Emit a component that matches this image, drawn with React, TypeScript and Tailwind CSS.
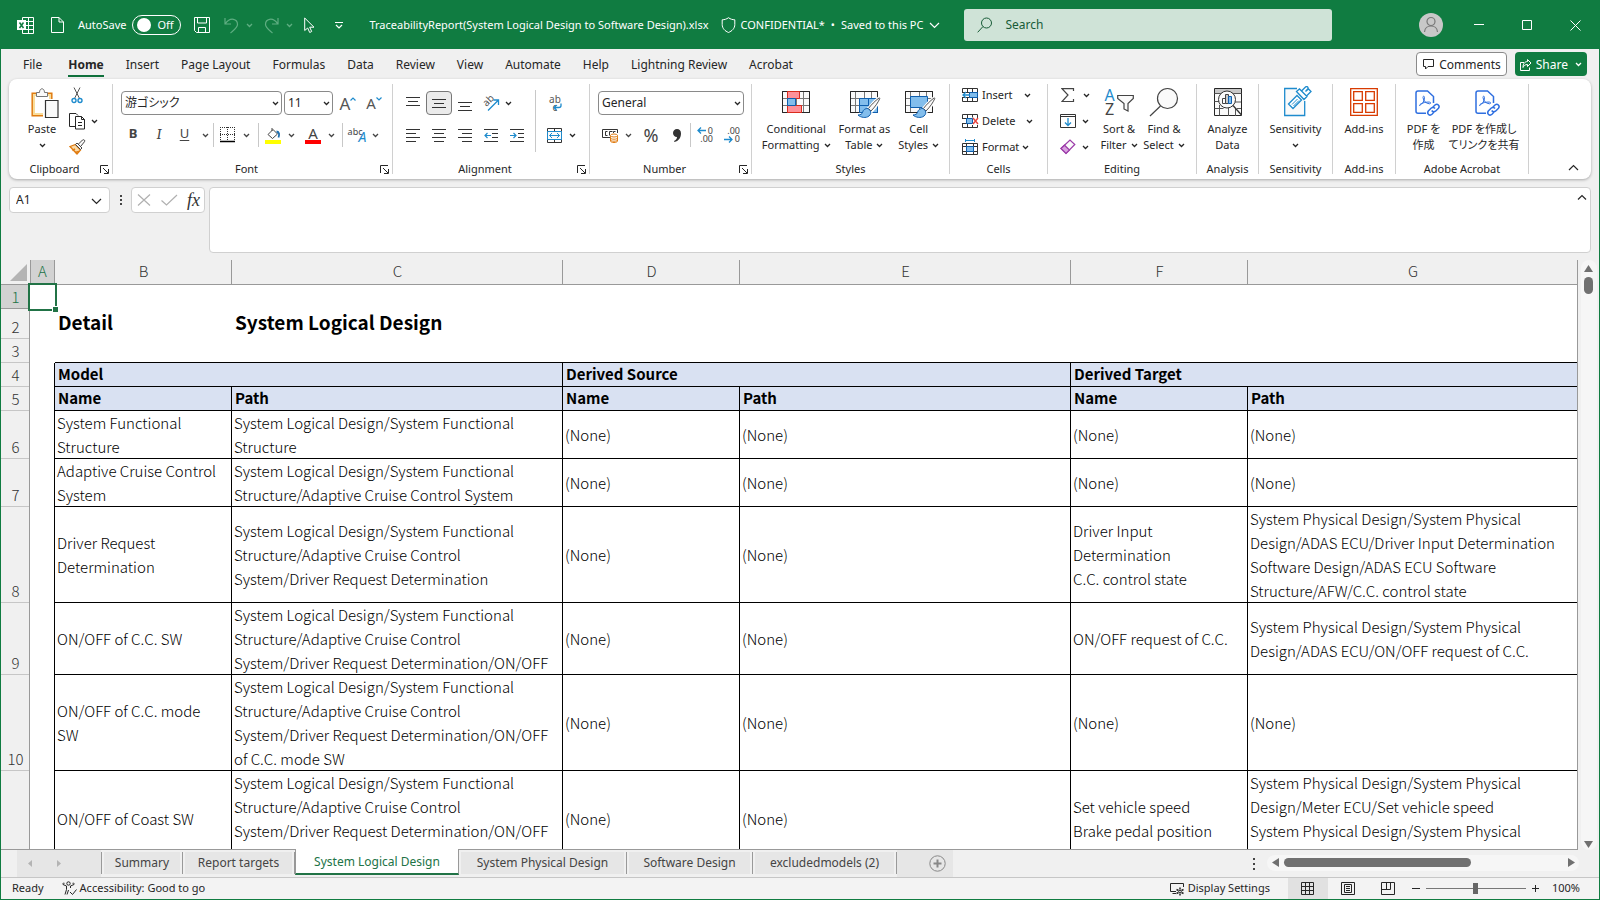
import type { ReactNode } from "react";

const menuTabs = ["File", "Home", "Insert", "Page Layout", "Formulas", "Data", "Review", "View", "Automate", "Help", "Lightning Review", "Acrobat"];

const sheets = [
    { name: "Summary", w: "w-[82px]" },
    { name: "Report targets", w: "w-[112px]" },
    { name: "System Logical Design", w: "w-[164px]" },
    { name: "System Physical Design", w: "w-[168px]" },
    { name: "Software Design", w: "w-[126px]" },
    { name: "excludedmodels (2)", w: "w-[144px]" },
];
const activeSheet = "System Logical Design";

const SYS = "System Logical Design/System Functional\n";
const ACC = SYS + "Structure/Adaptive Cruise Control";

const rows = [
    { n: 6, h: "h-[48px]", cells: ["System Functional\nStructure", SYS + "Structure", "(None)", "(None)", "(None)", "(None)"] },
    { n: 7, h: "h-[48px]", cells: ["Adaptive Cruise Control\nSystem", ACC + " System", "(None)", "(None)", "(None)", "(None)"] },
    {
        n: 8, h: "h-[96px]", cells: [
            "Driver Request\nDetermination",
            ACC + "\nSystem/Driver Request Determination",
            "(None)",
            "(None)",
            "Driver Input\nDetermination\nC.C. control state",
            "System Physical Design/System Physical\nDesign/ADAS ECU/Driver Input Determination\nSoftware Design/ADAS ECU Software\nStructure/AFW/C.C. control state",
        ],
    },
    {
        n: 9, h: "h-[72px]", cells: [
            "ON/OFF of C.C. SW",
            ACC + "\nSystem/Driver Request Determination/ON/OFF",
            "(None)",
            "(None)",
            "ON/OFF request of C.C.",
            "System Physical Design/System Physical\nDesign/ADAS ECU/ON/OFF request of C.C.",
        ],
    },
    {
        n: 10, h: "h-[96px]", cells: [
            "ON/OFF of C.C. mode\nSW",
            ACC + "\nSystem/Driver Request Determination/ON/OFF\nof C.C. mode SW",
            "(None)",
            "(None)",
            "(None)",
            "(None)",
        ],
    },
    {
        n: 11, h: "h-[96px]", cells: [
            "ON/OFF of Coast SW",
            ACC + "\nSystem/Driver Request Determination/ON/OFF\nof Coast SW",
            "(None)",
            "(None)",
            "Set vehicle speed\nBrake pedal position",
            "System Physical Design/System Physical\nDesign/Meter ECU/Set vehicle speed\nSystem Physical Design/System Physical\nDesign/Meter ECU/Brake pedal position",
        ],
    },
];

type IconProps = { w: number; h: number; children: ReactNode; className?: string };

function Icon({ w, h, children, className = "" }: IconProps) {
    return (
        <svg width={w} height={h} viewBox={`0 0 ${w} ${h}`} fill="none" stroke="currentColor" aria-hidden="true" className={"shrink-0 " + className}>
            {children}
        </svg>
    );
}

function Chevron({ className = "" }: { className?: string }) {
    return (
        <Icon w={7} h={5} className={className}>
            <path d="M1 1l2.5 2.5L6 1" strokeWidth="1.3" />
        </Icon>
    );
}

function Btn({ label, className = "", children }: { label: string; className?: string; children: ReactNode }) {
    return (
        <button type="button" aria-label={label} className={"flex h-6 shrink-0 items-center justify-center " + className}>
            {children}
        </button>
    );
}

function DropBtn({ label, className = "w-[10px]" }: { label: string; className?: string }) {
    return (
        <Btn label={label} className={className}>
            <Chevron />
        </Btn>
    );
}

function Sep() {
    return <div className="h-6 w-px shrink-0 bg-[#c8c8c8]" />;
}

function Combo({ label, value, className }: { label: string; value: string; className: string }) {
    return (
        <div className={"relative h-6 shrink-0 " + className}>
            <select aria-label={label} className="h-6 w-full appearance-none rounded border border-[#8a8a8a] bg-white pl-[3px] text-[12px] leading-[22px] [font-feature-settings:'palt']">
                <option>{value}</option>
            </select>
            <Chevron className="pointer-events-none absolute right-[3px] top-[10px]" />
        </div>
    );
}

function Group({ label, className, launcher, children }: { label: string; className: string; launcher?: boolean; children: ReactNode }) {
    return (
        <>
            <section aria-label={label} className={"flex shrink-0 flex-col " + className}>
                <div className="h-[80px]">{children}</div>
                <div className="flex h-5 items-center">
                    <span className="flex-1 text-center">{label}</span>
                    {launcher && (
                        <button type="button" aria-label={label + " settings"} className="w-3">
                            <Icon w={9} h={9}>
                                <path d="M.5 8V.5H8M3 3l5 5M8.500 4v4.500H4" />
                            </Icon>
                        </button>
                    )}
                </div>
            </section>
            <div className="my-[5px] w-px shrink-0 bg-[#d0d0d0]" />
        </>
    );
}

function BigBtn({ icon, lines, drop, className = "" }: { icon: ReactNode; lines: string[]; drop?: boolean; className?: string }) {
    return (
        <button type="button" className={"flex shrink-0 flex-col items-center whitespace-nowrap pt-[7px] leading-4 " + className}>
            <span className="flex h-[35px] justify-center">{icon}</span>
            <span>{lines[0]}</span>
            <span className="flex h-4 items-center gap-1">
                {lines[1]}
                {drop && <Chevron />}
            </span>
        </button>
    );
}

// ---- ribbon icons ----

const blue = "#1e8bcd";

function Grid({ children }: { children?: ReactNode }) {
    return (
        <>
            <path d="M.5 .5h27v21H.5z" fill="#fafafa" />
            <path d="M.5 7.500h27M.5 14.500h27M5.500 .5v21M14.500 .5v21M21.500 .5v21" stroke="#777" />
            <path d="M.5 .5h27v21H.5z" />
            {children}
        </>
    );
}

function Brush() {
    return (
        <>
            <path d="M29.500 6.500c-4 3-8 7-11 11l3 3c4-4 7-9 9-12.500.6-1.400 0-2.200-1-1.500z" fill="#fff" stroke="#fff" strokeWidth="3" />
            <path d="M29 7c-4 3-8 7-10.500 10.500l2.500 2.500c4-4 7-8.500 8.600-12 .4-1 0-1.300-.6-1z" fill="#fafafa" stroke="#555" />
            <path d="M18 17.500c-2.500-.3-5 1.200-5.500 4-.3 1.500-2 2.300-4.500 2.500 2.500 2.500 8 3.500 11 1 2-1.700 2-3.500 1.500-5z" fill="#83beec" stroke="#0f5fae" />
        </>
    );
}

function PasteIcon() {
    return (
        <Icon w={28} h={31} className="mt-[2px]">
            <path d="M1.200 5.200h19.600v22.600H1.200z" fill="#fff" stroke="#e07b10" strokeWidth="1.500" />
            <path d="M3 7h16v19H3z" stroke="#f8dc9a" strokeWidth="2" />
            <path d="M5.500 8.500v-4h3c0-5 5-5 5 0h3v4z" fill="#fafafa" stroke="#777" />
            <path d="M12 11h16v20H12z" fill="#fff" stroke="none" />
            <path d="M14.500 12.500h12.500v17H14.500z" fill="#fafafa" stroke="#333" strokeWidth="1.200" />
        </Icon>
    );
}

function CutIcon() {
    return (
        <Icon w={12} h={17}>
            <path d="M3 .5l5.500 11M9 .5L3.500 11.500" stroke="#555" />
            <circle cx="3" cy="13.500" r="2" stroke={blue} strokeWidth="1.400" />
            <circle cx="9" cy="13.500" r="2" stroke={blue} strokeWidth="1.400" />
        </Icon>
    );
}

function CopyIcon() {
    return (
        <Icon w={17} h={17}>
            <path d="M6 13.500H.5V.5H7l2 2" />
            <path d="M6.500 3.500h6l3 3v9.500h-9z" fill="#fff" />
            <path d="M12.500 3.500v3h3M9 9.500h4M9 12.500h4" />
        </Icon>
    );
}

function PainterIcon() {
    return (
        <Icon w={17} h={16}>
            <path d="M1 7.500l5.500-2 5 5.500-3.500 4z" fill="#f9d9a6" stroke="#e07b10" strokeWidth="1.300" />
            <path d="M3.500 11.500l2.500-1.500M6 13.500l4-1" stroke="#e07b10" strokeWidth="1.500" />
            <path d="M6.500 5.500l1.500-1.500 5 5-1.500 1.500zM9.500 5l4-4c1.200-1 3 .5 2 1.700L12 7" fill="#fafafa" stroke="#444" />
        </Icon>
    );
}

function Lines({ d }: { d: string }) {
    return (
        <Icon w={14} h={15}>
            <path d={d} stroke="#333" />
        </Icon>
    );
}

function Indent({ right }: { right?: boolean }) {
    return (
        <Icon w={14} h={15}>
            <path d="M0 1.500h14M8 5.500h6M8 9.500h6M0 13.500h14" stroke="#333" />
            <path d={right ? "M0 7.500h6M3.500 5L6 7.500 3.500 10" : "M7 7.500H1M3.500 5L1 7.500 3.500 10"} stroke={blue} strokeWidth="1.200" />
        </Icon>
    );
}

function BorderIcon() {
    return (
        <Icon w={15} h={16}>
            <path d="M.5 0v14M14.500 0v14M7.500 0v14M0 .5h15M0 7.500h15" stroke="#333" strokeDasharray="1 1" />
            <path d="M0 14.500h15" stroke="#000" strokeWidth="1.500" />
        </Icon>
    );
}

function BucketIcon() {
    return (
        <Icon w={16} h={17}>
            <path d="M3 7.500L8 2.500l4.500 4.500-5 4.500zM7 4V1" stroke="#444" />
            <path d="M11.500 4.500c3 .3 3 3 2 6" stroke="#1e6fb0" strokeWidth="1.800" />
            <path d="M0 13h16v4H0z" fill="#ffff00" stroke="none" />
        </Icon>
    );
}

function OrientationIcon() {
    return (
        <span className="relative block h-4 w-[17px] text-[10px] leading-none text-[#555]">
            <span className="absolute -left-px top-0 -rotate-45">ab</span>
            <Icon w={17} h={16} className="absolute left-0 top-0">
                <path d="M5 15.500L15 5.500M10.500 5h5v5" stroke={blue} strokeWidth="1.300" />
            </Icon>
        </span>
    );
}

function WrapIcon() {
    return (
        <span className="relative block h-4 w-[14px] text-[10px] leading-[8px] text-[#555]">
            ab
            <br />
            c
            <Icon w={9} h={8} className="absolute bottom-0 right-0">
                <path d="M8 .5v2c0 1.500-1 2-2 2H1M3.500 2L1 4.500 3.500 7" stroke={blue} strokeWidth="1.300" />
            </Icon>
        </span>
    );
}

function MergeIcon() {
    return (
        <Icon w={15} h={15}>
            <path d="M.5 .5h14v14H.5zM7.500.5v4M7.500 11.500v3" stroke="#333" />
            <path d="M.5 3.500h14v8H.5z" stroke={blue} fill="#fafafa" />
            <path d="M2.500 7.500h10M5 5L2.500 7.500 5 10M10 5l2.500 2.500L10 10" stroke={blue} />
        </Icon>
    );
}

function CurrencyIcon() {
    return (
        <Icon w={17} h={16}>
            <path d="M8 10.500H.5v-8h15V6" stroke="#333" />
            <path d="M5.500 4.500h-2v4h2M7.500 8.500v-4h3M11.500 6v-1.500h2" stroke="#333" />
            <path d="M8.500 8.500v5.500c0 2 7 2 7 0V8.500" fill="#fff" stroke="#e07b10" />
            <ellipse cx="12" cy="8.500" rx="3.500" ry="1.500" fill="#fff" stroke="#e07b10" />
            <path d="M8.500 11c0 1.600 7 1.600 7 0M8.500 13c0 1.600 7 1.600 7 0" stroke="#e07b10" />
        </Icon>
    );
}

function DecimalIcon({ more }: { more?: boolean }) {
    return (
        <span className="relative block h-4 w-4 text-right text-[9px] leading-[8px] text-[#444]">
            {more ? "0" : ".00"}
            <br />
            {more ? ".00" : "0"}
            <Icon w={9} h={7} className={more ? "absolute left-0 top-0" : "absolute bottom-0 left-0"}>
                <path d={more ? "M9 3.500H1M4 .5l-3 3 3 3" : "M0 3.500h8M5 .5l3 3-3 3"} stroke={blue} strokeWidth="1.300" />
            </Icon>
        </span>
    );
}

function ConditionalIcon() {
    return (
        <Icon w={28} h={22} className="mt-[5px]">
            <Grid>
                <path d="M5.500 .5h12v7h-12zM5.500 14.500h14v7h-14z" fill="#ff9199" stroke="#d92b1c" />
                <path d="M5.500 7.500h8v7h-8z" fill="#83beec" stroke="#0f5fae" />
            </Grid>
        </Icon>
    );
}

function FormatTableIcon() {
    return (
        <Icon w={31} h={27} className="ml-[3px] mt-[5px]">
            <Grid>
                <path d="M9.500 7.500h18v14h-18z" fill="#83beec" stroke="#0f5fae" />
                <path d="M9.500 14.500h18M18.500 7.500v14" stroke="#0f5fae" />
            </Grid>
            <Brush />
        </Icon>
    );
}

function CellStylesIcon() {
    return (
        <Icon w={31} h={27} className="ml-[3px] mt-[5px]">
            <Grid>
                <path d="M5.500 5.500h17v11h-17z" fill="#83beec" stroke="#0f5fae" />
            </Grid>
            <Brush />
        </Icon>
    );
}

function InsertCellIcon() {
    return (
        <Icon w={17} h={15}>
            <path d="M.5 .5h15v13H.5zM5.500.5v13M10.500.5v13M.5 4.500h15M.5 9.500h15" stroke="#333" />
            <path d="M7.500 4.500h8v5h-8z" fill="#83beec" stroke="#0f5fae" />
            <path d="M0 5h7v4H0z" fill="#fff" stroke="none" />
            <path d="M8 7H1M4 4L1 7l3 3" stroke={blue} strokeWidth="1.300" />
        </Icon>
    );
}

function DeleteCellIcon() {
    return (
        <Icon w={17} h={15}>
            <path d="M.5 4V.5h15V4M.5 10v3.500h15V11M5.500.5v13M10.500.5v3M10.500 11v2.500M0 4.500h6M0 9.500h6" stroke="#333" />
            <path d="M4.500 4.500h6v5h-6z" fill="#83beec" stroke="#0f5fae" />
            <path d="M11 4l5 6M16 4l-5 6" stroke="#e8413a" strokeWidth="1.400" />
        </Icon>
    );
}

function FormatCellIcon() {
    return (
        <Icon w={17} h={17}>
            <path d="M3.500 1.500h9M3.500 0v3M12.500 0v3" stroke={blue} />
            <path d="M.5 4.500h15v11H.5zM4.500 4.500v11M11.500 4.500v11M.5 7.500h15M.5 12.500h15" stroke="#333" />
            <path d="M4.500 7.500h7v5h-7z" fill="#83beec" stroke="#0f5fae" />
        </Icon>
    );
}

function SumIcon() {
    return (
        <Icon w={14} h={15}>
            <path d="M12.500 3V.7H1l6 6.300-6 6.500h11.500V11" stroke="#444" strokeWidth="1.200" />
        </Icon>
    );
}

function FillDownIcon() {
    return (
        <Icon w={16} h={14}>
            <path d="M.5 .5h15v13H.5zM.5 2.500h15" stroke="#333" />
            <path d="M8 4v7M5 8.500l3 3 3-3" stroke={blue} strokeWidth="1.300" />
        </Icon>
    );
}

function EraserIcon() {
    return (
        <Icon w={16} h={16}>
            <path d="M1 9.500L10 1l4.800 4.500L6 14.500z" fill="#fafafa" stroke="#9b3ba8" strokeWidth="1.200" />
            <path d="M1 9.500L4.500 6.200l5 4.800L6 14.500z" fill="#d9a0e0" stroke="#9b3ba8" strokeWidth="1.200" />
        </Icon>
    );
}

function SortFilterIcon() {
    return (
        <span className="mt-[2px] flex h-7 gap-[2px]">
            <span className="block text-[16px] leading-[14px] text-[#444]">
                <span className="block text-[#1e8bcd]">A</span>
                <span className="block">Z</span>
            </span>
            <Icon w={17} h={28}>
                <path d="M.7 7.500h15.600v3L11 15.500v7.500l-4-2v-5.500L.7 10.500z" fill="#fafafa" stroke="#444" strokeWidth="1.200" />
            </Icon>
        </span>
    );
}

function FindIcon() {
    return (
        <Icon w={30} h={30} className="mt-[1px]">
            <circle cx="18.500" cy="11.500" r="10" fill="#fafafa" stroke="#444" strokeWidth="1.200" />
            <path d="M11.500 19L1 29" stroke="#444" strokeWidth="1.200" />
        </Icon>
    );
}

function AnalyzeIcon() {
    return (
        <Icon w={28} h={28} className="mt-[2px]">
            <path d="M.5 .5h27v27H.5z" fill="#fafafa" />
            <path d="M1 1h26v4H1z" fill="#c8c8c8" stroke="none" />
            <path d="M.5 5.500h27M.5 13.500h6M.5 20.500h9M5.500 17v10.500M14.500 20v8M21.500 20v8M21 14h6M23 20.500h4" stroke="#555" />
            <circle cx="13" cy="11.500" r="8.500" fill="#fafafa" stroke="#333" />
            <path d="M19 17.500l8.500 9.500" stroke="#333" strokeWidth="1.300" />
            <path d="M8.500 10.500h3v5h-3z" stroke="#444" fill="#fff" />
            <path d="M11.500 6.500h3v9h-3z" stroke="#444" fill="#c8c8c8" />
            <path d="M14.500 8.500h3v7h-3z" fill="#83beec" stroke="#0f5fae" />
        </Icon>
    );
}

function SensitivityIcon() {
    return (
        <Icon w={28} h={31}>
            <path d="M13 2.500H.7V29.500h20V15" fill="#fafafa" stroke={blue} strokeWidth="1.300" />
            <path d="M4.500 18l8.500-8.500 4.500 4.500L9 22.500z" fill="#fff" stroke={blue} strokeWidth="1.300" />
            <path d="M8 18.500l5.500-5.500M9.500 20L15 14.500" stroke={blue} />
            <path d="M12.500 5.500l3-2.500 7.500 7.500-3 3zM17.500 5l4-4c1.500-1.300 3.500.5 2 2.200L21.500 5.500l3-2.500 2.500 2.500-4.500 4.500" fill="#fff" stroke={blue} strokeWidth="1.300" />
        </Icon>
    );
}

function AddinsIcon() {
    return (
        <Icon w={28} h={28} className="mt-[2px]">
            <path d="M.7.700h26.600v26.600H.7z" fill="#fff" stroke="#d83b01" strokeWidth="1.300" />
            <path d="M3.700 3.700h8.600v8.600H3.700zM15.700 3.700h8.600v8.600h-8.600zM3.700 15.700h8.600v8.600H3.700zM15.700 15.700h8.600v8.600h-8.600z" stroke="#d83b01" strokeWidth="1.300" />
        </Icon>
    );
}

function PdfIcon() {
    return (
        <Icon w={26} h={29} className="ml-2 mt-1">
            <path d="M11 23.300H3c-1.300 0-2-.8-2-2V3c0-1.300.8-2 2-2h9.500l6 5.500V13" stroke="#2f6fe0" strokeWidth="1.500" />
            <path d="M4.500 15.500c3-1.500 5-4.500 5-8 0-1.700-1.700-1.700-1.500 0 .3 3.500 3 6 6.500 6.300 1.500 0 1.500-1.600 0-1.700-4-.3-10 1.400-10 3.400z" stroke="#2f6fe0" />
            <g transform="translate(.5 -.5)" stroke="#fff" strokeWidth="4">
                <path d="M18.500 17.500l2-2c2.500-2 5.300.8 3.500 3.200l-3 3M19 21.500l-2.300 2.700c-2.300 2.300-5.500-.5-3.500-3.200l2.800-2.800" />
            </g>
            <path d="M17.500 17.500l2.500-2.500c2.500-2 5.300.8 3.500 3.200l-3 3c-1.300 1-3 .6-3.800-.7M19.500 21.500l-2.500 2.700c-2.500 2.300-5.500-.5-3.700-3.200l3-3c1.200-1 3-.7 3.700.5" stroke="#2f6fe0" strokeWidth="1.500" />
        </Icon>
    );
}

// ---- window parts ----

function TitleBar() {
    return (
        <header className="flex h-[49px] shrink-0 items-center bg-[#107c41] pt-px text-white">
            <Icon w={17} h={17} className="ml-4">
                <path d="M5.500.5h11v16h-11zM5.500 4.500h11M5.500 8.500h11M5.500 12.500h11M11.500.5v16" />
                <path d="M0 3h9v10H0z" fill="#fff" stroke="none" />
                <path d="M2.500 5.500l4 5.500M6.500 5.500l-4 5.500" stroke="#107c41" strokeWidth="1.500" />
            </Icon>
            <Btn label="New" className="ml-4 w-[14px]">
                <Icon w={13} h={16}>
                    <path d="M.5 .5H8l4.500 4.500v10.500H.5zM8 .5V5h4.500" />
                </Icon>
            </Btn>
            <label htmlFor="autosave" className="ml-[14px]">AutoSave</label>
            <button id="autosave" type="button" role="switch" aria-checked="false" className="ml-[6px] flex h-5 w-[49px] items-center gap-[6px] rounded-full border border-white pl-1">
                <span className="h-[14px] w-[14px] rounded-full bg-white" />
                Off
            </button>
            <Btn label="Save" className="ml-3 w-[18px]">
                <Icon w={16} h={16}>
                    <path d="M.5 .5h15v15h-13l-2-2zM3.500.5v5.500h9V.5M4.500 15.500v-5h7v5" />
                </Icon>
            </Btn>
            <Btn label="Undo" className="ml-3 w-4 text-[#5fae82]">
                <Icon w={15} h={17}>
                    <path d="M1 1v6h6M1.500 6.500c5-7 12-4.500 12 1 0 3-3 5-7 8.500" strokeWidth="1.200" />
                </Icon>
            </Btn>
            <DropBtn label="Undo list" className="ml-1 w-3 text-[#5fae82]" />
            <Btn label="Redo" className="ml-2 w-4 text-[#5fae82]">
                <Icon w={15} h={17}>
                    <path d="M14 1v6H8M13.500 6.500c-5-7-12-4.500-12 1 0 3 3 5 7 8.500" strokeWidth="1.200" />
                </Icon>
            </Btn>
            <DropBtn label="Redo list" className="ml-1 w-3 text-[#5fae82]" />
            <Btn label="Select objects" className="ml-2 w-3">
                <Icon w={11} h={16}>
                    <path d="M.7 1v12.500l3-2.500 2 4.500 2-1-2-4.300h4.300z" />
                </Icon>
            </Btn>
            <Btn label="Customize toolbar" className="ml-[18px] w-3">
                <Icon w={8} h={7}>
                    <path d="M0 .5h8M1 3l3 3 3-3" strokeWidth="1.200" />
                </Icon>
            </Btn>
            <h1 className="ml-6 whitespace-nowrap">TraceabilityReport(System Logical Design to Software Design).xlsx</h1>
            <Icon w={15} h={16} className="ml-3">
                <path d="M7.500.7c2 1.500 4 2 6.300 2.100v4.700c0 4-2.800 6.500-6.300 8C4 14 1.200 11.500 1.200 7.500V2.800C3.500 2.700 5.500 2.200 7.500.7z" />
            </Icon>
            <span className="ml-[5px] whitespace-nowrap">CONFIDENTIAL*</span>
            <span className="mx-[6px]">•</span>
            <button type="button" className="flex items-center gap-[6px] whitespace-nowrap">
                Saved to this PC
                <Icon w={11} h={7}>
                    <path d="M1 1l4.500 4.500L10 1" strokeWidth="1.200" />
                </Icon>
            </button>
            <label className="ml-6 flex h-8 w-[368px] items-center gap-3 rounded-[3px] bg-[#cfe3d7] pl-[13px] text-[#185c37]">
                <Icon w={16} h={16}>
                    <circle cx="9.500" cy="6" r="5" />
                    <path d="M6 9.500L.7 15.300" />
                </Icon>
                <input type="search" aria-label="Search" placeholder="Search" className="min-w-0 flex-1 bg-transparent text-[12px] outline-none placeholder:text-[#185c37]" />
            </label>
            <div className="ml-auto flex items-center">
                <button type="button" aria-label="Account" className="mr-3 flex h-6 w-6 items-center justify-center rounded-full bg-[#c8c8c8] text-[#777]">
                    <Icon w={16} h={18}>
                        <circle cx="8" cy="5.500" r="4" strokeWidth="1.200" />
                        <path d="M1.500 16c.5-8 12.500-8 13 0" strokeWidth="1.200" />
                    </Icon>
                </button>
                <Btn label="Minimize" className="w-12">
                    <Icon w={10} h={10}><path d="M0 4.500h10" /></Icon>
                </Btn>
                <Btn label="Maximize" className="w-12">
                    <Icon w={10} h={10}><path d="M.5 .5h9v9h-9z" /></Icon>
                </Btn>
                <Btn label="Close" className="w-12">
                    <Icon w={11} h={11}><path d="M.5 .5l10 10M10.500.5l-10 10" /></Icon>
                </Btn>
            </div>
        </header>
    );
}

function MenuBar() {
    return (
        <div className="flex h-[30px] shrink-0 items-center pl-[22px] pr-3 text-[12px]">
            <nav className="flex gap-[22px] pt-px">
                {menuTabs.map((tab) => (
                    <a
                        key={tab}
                        href="#"
                        className={"h-6 whitespace-nowrap leading-6 " + (tab === "Home" ? "ml-1 border-b-2 border-[#0f703b] font-bold" : "")}
                    >
                        {tab}
                    </a>
                ))}
            </nav>
            <button type="button" className="ml-auto flex h-6 items-center gap-[5px] rounded border border-[#8a8a8a] bg-white px-[5px] pt-px">
                <Icon w={12} h={11}>
                    <path d="M1.500.5h10v7H6L3.500 10V7.500h-2z" />
                </Icon>
                Comments
            </button>
            <button type="button" className="ml-2 flex h-6 items-center gap-1 rounded bg-[#107c41] px-[5px] pt-px text-white">
                <Icon w={12} h={12}>
                    <path d="M4 3.500H.5v8h9v-3M7.500.5l3.500 3.500-3.500 3.500V5.500C5 5.500 4 6.500 3 8.500c0-4 2-6 4.500-6z" />
                </Icon>
                Share
                <Chevron className="ml-[3px]" />
            </button>
        </div>
    );
}

function Ribbon() {
    return (
        <div className="mx-2 flex h-[100px] shrink-0 rounded-lg bg-white shadow-[0_1px_3px_rgba(0,0,0,0.3)]">
            <Group label="Clipboard" className="w-[103px]" launcher>
                <div className="flex">
                    <BigBtn className="ml-2 w-[50px]" icon={<span className="ml-[5px]"><PasteIcon /></span>} lines={["Paste", ""]} drop />
                    <div className="-ml-[2px] flex flex-col gap-[2px] pt-1">
                        <Btn label="Cut" className="w-6"><CutIcon /></Btn>
                        <div className="flex">
                            <Btn label="Copy" className="w-6"><CopyIcon /></Btn>
                            <DropBtn label="Copy options" />
                        </div>
                        <Btn label="Format Painter" className="w-6"><PainterIcon /></Btn>
                    </div>
                </div>
            </Group>

            <Group label="Font" className="w-[279px]" launcher>
                <div className="flex pl-2 pt-3">
                    <Combo label="Font name" value="游ゴシック" className="w-[161px]" />
                    <Combo label="Font size" value="11" className="ml-[2px] w-[49px]" />
                    <Btn label="Increase font size" className="ml-[2px] w-[26px]">
                        <span className="text-[17px] leading-none text-[#555]">A</span>
                        <Icon w={6} h={4} className="mb-[9px]"><path d="M.5 3.500L3 1l2.500 2.500" stroke={blue} strokeWidth="1.200" /></Icon>
                    </Btn>
                    <Btn label="Decrease font size" className="w-[26px]">
                        <span className="text-[15px] leading-none text-[#555]">A</span>
                        <Icon w={6} h={4} className="mb-[9px]"><path d="M.5 .5L3 3 5.500.5" stroke={blue} strokeWidth="1.200" /></Icon>
                    </Btn>
                </div>
                <div className="flex pl-[7px] pt-2 text-[#444]">
                    <Btn label="Bold" className="w-[26px] pb-[2px] text-[13px] font-bold">B</Btn>
                    <Btn label="Italic" className="w-[26px] pb-[2px] font-serif text-[15px] italic">I</Btn>
                    <Btn label="Underline" className="w-[25px] pb-[2px] text-[13px] underline underline-offset-2">U</Btn>
                    <DropBtn label="Underline options" className="w-[16px]" />
                    <Sep />
                    <Btn label="Borders" className="w-[27px]"><BorderIcon /></Btn>
                    <DropBtn label="Border options" />
                    <div className="w-[7px]" />
                    <Sep />
                    <Btn label="Fill color" className="w-7"><BucketIcon /></Btn>
                    <DropBtn label="Fill color options" className="w-2" />
                    <Btn label="Font color" className="ml-1 w-7">
                        <span className="flex flex-col items-center border-b-4 border-[#ff0000] px-[3px] text-[15px] leading-[13px]">A</span>
                    </Btn>
                    <DropBtn label="Font color options" className="w-2" />
                    <div className="w-[7px]" />
                    <Sep />
                    <Btn label="Phonetic" className="w-7">
                        <span className="mb-2 text-[9px] leading-none">abc</span>
                        <span className="-ml-1 mt-1 text-[14px] italic leading-none text-[#1e8bcd]">A</span>
                    </Btn>
                    <DropBtn label="Phonetic options" className="w-2" />
                </div>
            </Group>

            <Group label="Alignment" className="w-[196px]" launcher>
                <div className="flex">
                    <div className="flex w-[137px] flex-col gap-2 pl-[7px] pt-3">
                        <div className="flex">
                            <Btn label="Top align" className="w-[26px]"><Lines d="M0 1.500h14M2 5.500h10M0 9.500h14" /></Btn>
                            <Btn label="Middle align" className="w-[26px] rounded border border-[#777] bg-[#ebebeb]"><Lines d="M0 3.500h14M2 7.500h10M0 11.500h14" /></Btn>
                            <Btn label="Bottom align" className="w-[26px]"><Lines d="M0 6.500h14M2 10.500h10M0 14.500h14" /></Btn>
                            <Btn label="Orientation" className="w-[26px]"><OrientationIcon /></Btn>
                            <DropBtn label="Orientation options" className="w-2" />
                        </div>
                        <div className="flex">
                            <Btn label="Align left" className="w-[26px]"><Lines d="M0 1.500h14M0 5.500h10M0 9.500h14M0 13.500h10" /></Btn>
                            <Btn label="Center" className="w-[26px]"><Lines d="M0 1.500h14M2 5.500h10M0 9.500h14M2 13.500h10" /></Btn>
                            <Btn label="Align right" className="w-[26px]"><Lines d="M0 1.500h14M4 5.500h10M0 9.500h14M4 13.500h10" /></Btn>
                            <Btn label="Decrease indent" className="w-[26px]"><Indent /></Btn>
                            <Btn label="Increase indent" className="w-[26px]"><Indent right /></Btn>
                        </div>
                    </div>
                    <div className="ml-[5px] mt-[11px] h-[62px] w-px bg-[#c8c8c8]" />
                    <div className="flex flex-col gap-2 pl-[5px] pt-3">
                        <Btn label="Wrap text" className="w-[28px]"><WrapIcon /></Btn>
                        <div className="flex">
                            <Btn label="Merge and center" className="w-[26px]"><MergeIcon /></Btn>
                            <DropBtn label="Merge options" />
                        </div>
                    </div>
                </div>
            </Group>

            <Group label="Number" className="w-[161px]" launcher>
                <div className="pl-2 pt-3">
                    <Combo label="Number format" value="General" className="w-[146px]" />
                </div>
                <div className="flex pl-[7px] pt-2 text-[#444]">
                    <Btn label="Currency" className="w-[26px]"><CurrencyIcon /></Btn>
                    <DropBtn label="Currency options" />
                    <Btn label="Percent" className="ml-[5px] w-[26px] text-[18px]">%</Btn>
                    <Btn label="Comma" className="w-[26px]">
                        <Icon w={8} h={13}>
                            <path d="M4 0c2.500 0 4 1.600 4 4.500C8 9 5.500 12 1.500 13l-.5-1c2-.8 3-2.200 3-4C1.500 8 0 6.200 0 4s1.700-4 4-4z" fill="#333" stroke="none" />
                        </Icon>
                    </Btn>
                    <Sep />
                    <Btn label="Increase decimal" className="w-[28px]"><DecimalIcon more /></Btn>
                    <Btn label="Decrease decimal" className="w-[26px]"><DecimalIcon /></Btn>
                </div>
            </Group>

            <Group label="Styles" className="w-[197px]">
                <div className="flex justify-center gap-2">
                    <BigBtn icon={<ConditionalIcon />} lines={["Conditional", "Formatting"]} drop />
                    <BigBtn icon={<FormatTableIcon />} lines={["Format as", "Table"]} drop />
                    <BigBtn icon={<CellStylesIcon />} lines={["Cell", "Styles"]} drop />
                </div>
            </Group>

            <Group label="Cells" className="w-[97px]">
                <div className="flex flex-col gap-[2px] pl-3 pt-1">
                    <button type="button" className="flex h-6 items-center gap-[3px]"><InsertCellIcon />Insert<Chevron className="ml-2" /></button>
                    <button type="button" className="flex h-6 items-center gap-[3px]"><DeleteCellIcon />Delete<Chevron className="ml-2" /></button>
                    <button type="button" className="flex h-6 items-center gap-[3px]"><FormatCellIcon />Format<Chevron /></button>
                </div>
            </Group>

            <Group label="Editing" className="w-[148px]">
                <div className="flex">
                    <div className="flex w-[52px] flex-col gap-[2px] pl-[7px] pt-1">
                        <div className="flex">
                            <Btn label="AutoSum" className="w-[26px]"><SumIcon /></Btn>
                            <DropBtn label="AutoSum options" />
                        </div>
                        <div className="flex">
                            <Btn label="Fill" className="w-[26px]"><FillDownIcon /></Btn>
                            <DropBtn label="Fill options" className="w-2" />
                        </div>
                        <div className="flex">
                            <Btn label="Clear" className="w-[26px]"><EraserIcon /></Btn>
                            <DropBtn label="Clear options" className="w-2" />
                        </div>
                    </div>
                    <BigBtn className="w-[38px]" icon={<SortFilterIcon />} lines={["Sort &", "Filter"]} drop />
                    <BigBtn className="ml-[5px] w-[42px]" icon={<FindIcon />} lines={["Find &", "Select"]} drop />
                </div>
            </Group>

            <Group label="Analysis" className="w-[61px]">
                <BigBtn className="w-full" icon={<AnalyzeIcon />} lines={["Analyze", "Data"]} />
            </Group>
            <Group label="Sensitivity" className="w-[73px]">
                <BigBtn className="w-full" icon={<span className="ml-1"><SensitivityIcon /></span>} lines={["Sensitivity", ""]} drop />
            </Group>
            <Group label="Add-ins" className="w-[62px]">
                <BigBtn className="w-full" icon={<AddinsIcon />} lines={["Add-ins", ""]} />
            </Group>
            <Group label="Adobe Acrobat" className="w-[132px]">
                <div className="flex justify-center gap-2 pl-[2px] [font-feature-settings:'palt']">
                    <BigBtn icon={<PdfIcon />} lines={["PDF を", "作成"]} />
                    <BigBtn icon={<PdfIcon />} lines={["PDF を作成し", "てリンクを共有"]} />
                </div>
            </Group>

            <Btn label="Collapse ribbon" className="ml-auto mr-[6px] w-6 self-end">
                <Icon w={11} h={7}><path d="M1 6l4.500-4.500L10 6" strokeWidth="1.200" /></Icon>
            </Btn>
        </div>
    );
}

function FormulaBar() {
    return (
        <div className="mx-2 mb-[7px] mt-2 flex h-[66px] shrink-0">
            <div className="relative h-[26px] w-[101px]">
                <select aria-label="Name box" className="h-full w-full appearance-none rounded border border-[#d0d0d0] bg-white pl-[6px] text-[12px]">
                    <option>A1</option>
                </select>
                <Icon w={11} h={7} className="pointer-events-none absolute right-2 top-[11px]">
                    <path d="M1 1l4.500 4.500L10 1" strokeWidth="1.200" />
                </Icon>
            </div>
            <div className="flex h-[26px] w-[21px] flex-col items-center justify-center gap-[2px]">
                <span className="h-[2px] w-[2px] bg-[#444]" />
                <span className="h-[2px] w-[2px] bg-[#444]" />
                <span className="h-[2px] w-[2px] bg-[#444]" />
            </div>
            <div className="flex h-[26px] w-[74px] items-center justify-between rounded border border-[#d0d0d0] bg-white pl-[5px] pr-1 text-[#b0b0b0]">
                <button type="button" aria-label="Cancel">
                    <Icon w={14} h={12}><path d="M1 .5l12 11M13 .5L1 11.500" strokeWidth="1.200" /></Icon>
                </button>
                <button type="button" aria-label="Enter">
                    <Icon w={17} h={12}><path d="M.5 6.500l5 4.500L16 1" strokeWidth="1.200" /></Icon>
                </button>
                <button type="button" className="font-['Liberation_Serif',serif] text-[18px] italic leading-5 text-[#333]">fx</button>
            </div>
            <div className="relative ml-1 flex-1">
                <textarea aria-label="Formula" className="block h-full w-full resize-none rounded border border-[#d0d0d0] bg-white outline-none" />
                <button type="button" aria-label="Collapse formula bar" className="absolute right-1 top-[7px]">
                    <Icon w={10} h={6}><path d="M1 5.500L5 1.500l4 4" strokeWidth="1.200" /></Icon>
                </button>
            </div>
        </div>
    );
}

const colHead = "p-0 pb-[3px] font-light text-[#333]";
const rowHead = "p-0 text-center align-bottom font-light leading-[24px] text-[#333] bg-[#f0f0f0] shadow-[inset_-1px_0_0_#999,inset_0_-1px_0_#c6c6c6]";
const headCell = "bg-[#d9e1f2] pt-0 pb-[2px] pl-[3px] text-left font-bold leading-[22px] text-black shadow-[inset_-1px_-1px_0_#000]";
const bodyCell = "whitespace-pre py-0 pl-[2px] pr-0 font-light leading-[24px] text-black shadow-[inset_-1px_-1px_0_#000]";
const titleCell = "pt-0 pb-1 pl-[3px] text-[19px] font-bold leading-[26px] text-black";
const blackRight = "p-0 shadow-[inset_-1px_0_0_#000]";

function Sheet() {
    return (
        <div className="flex min-h-0 flex-1">
            <div className="min-w-0 flex-1 overflow-hidden border-b border-r border-[#999] bg-white">
                <table className="w-full min-w-[1577px] table-fixed border-separate border-spacing-0 font-['Noto_Sans_CJK_JP',sans-serif] text-[15px]">
                    <colgroup>
                        <col className="w-[29px]" />
                        <col className="w-[25px]" />
                        <col className="w-[177px]" />
                        <col className="w-[331px]" />
                        <col className="w-[177px]" />
                        <col className="w-[331px]" />
                        <col className="w-[177px]" />
                        <col />
                    </colgroup>
                    <thead>
                        <tr className="h-[25px] bg-[#f0f0f0] leading-[22px]">
                            <th className="p-0 pl-[9px] shadow-[inset_0_-1px_0_#999]">
                                <Icon w={17} h={17}><path d="M17 0v17H0z" fill="#b4b4b4" stroke="none" /></Icon>
                            </th>
                            <th className="bg-[#d2d2d2] p-0 pb-[3px] font-light text-[#217346] shadow-[inset_1px_-1px_0_#999,inset_-1px_0_0_#999]">A</th>
                            {["B", "C", "D", "E", "F"].map((c) => (
                                <th key={c} className={colHead + " shadow-[inset_-1px_-1px_0_#999]"}>{c}</th>
                            ))}
                            <th className={colHead + " shadow-[inset_0_-1px_0_#999]"}>G</th>
                        </tr>
                    </thead>
                    <tbody>
                        <tr className="h-[24px]">
                            <th className="bg-[#d2d2d2] p-0 text-center font-light leading-[24px] text-[#217346] shadow-[inset_-1px_-1px_0_#999]">1</th>
                            <td className="relative p-0">
                                <span className="absolute -inset-[2px] border-2 border-[#217346]" />
                                <span className="absolute -bottom-1 -right-1 h-[7px] w-[7px] border border-white bg-[#217346]" />
                            </td>
                            <td colSpan={6} className="p-0" />
                        </tr>
                        <tr className="h-[30px]">
                            <th className={rowHead}>2</th>
                            <td className="p-0" />
                            <td className={titleCell}>Detail</td>
                            <td colSpan={5} className={titleCell}>System Logical Design</td>
                        </tr>
                        <tr className="h-[24px]">
                            <th className={rowHead}>3</th>
                            <td className="p-0" />
                            <td colSpan={6} className="p-0 shadow-[inset_0_-1px_0_#000]" />
                        </tr>
                        <tr className="h-[24px]">
                            <th className={rowHead}>4</th>
                            <td className={blackRight} />
                            <th colSpan={2} className={headCell}>Model</th>
                            <th colSpan={2} className={headCell}>Derived Source</th>
                            <th colSpan={2} className={headCell}>Derived Target</th>
                        </tr>
                        <tr className="h-[24px]">
                            <th className={rowHead}>5</th>
                            <td className={blackRight} />
                            {["Name", "Path", "Name", "Path", "Name", "Path"].map((h, i) => (
                                <th key={i} className={headCell}>{h}</th>
                            ))}
                        </tr>
                        {rows.map((row) => (
                            <tr key={row.n} className={row.h}>
                                <th className={rowHead}>{row.n}</th>
                                <td className={blackRight} />
                                {row.cells.map((text, i) => (
                                    <td key={i} className={bodyCell}>{text}</td>
                                ))}
                            </tr>
                        ))}
                    </tbody>
                </table>
            </div>
            <div className="flex w-[21px] flex-col items-center">
                <div className="flex w-4 flex-1 flex-col items-center rounded-full bg-[#f6f6f6] pb-[2px] pt-[5px] text-[#707070]">
                    <button type="button" aria-label="Scroll up"><Icon w={9} h={7}><path d="M4.500 0L9 7H0z" fill="currentColor" stroke="none" /></Icon></button>
                    <div className="mt-[5px] h-[17px] w-[9px] rounded-full bg-[#707070]" />
                    <button type="button" aria-label="Scroll down" className="mt-auto"><Icon w={9} h={7}><path d="M4.500 7L0 0h9z" fill="currentColor" stroke="none" /></Icon></button>
                </div>
            </div>
        </div>
    );
}

function SheetTabs() {
    return (
        <div className="flex h-[28px] shrink-0 border-b border-[#c6c6c6]">
            <div className="ml-4 flex w-[84px] items-center gap-[25px] bg-[#e6e6e6] pl-[11px] text-[#b4b4b4]">
                <button type="button" aria-label="Previous sheet"><Icon w={4} h={7}><path d="M4 0v7L0 3.500z" fill="currentColor" stroke="none" /></Icon></button>
                <button type="button" aria-label="Next sheet"><Icon w={4} h={7}><path d="M0 0v7l4-3.500z" fill="currentColor" stroke="none" /></Icon></button>
            </div>
            <div role="tablist" className="flex text-[12px] text-[#444]">
                {sheets.map(({ name, w }) =>
                    name === activeSheet ? (
                        <button key={name} type="button" role="tab" aria-selected="true" className={"relative -mt-px h-[26px] whitespace-nowrap border-x border-b-2 border-x-[#999] border-b-[#217346] bg-white pt-[2px] text-[#217346] " + w}>
                            {name}
                        </button>
                    ) : (
                        <button key={name} type="button" role="tab" aria-selected="false" className={"mt-[2px] h-[22px] whitespace-nowrap border-r border-[#999] px-[2px] first:border-l " + w}>
                            <span className="block bg-[#e6e6e6] leading-[22px]">{name}</span>
                        </button>
                    )
                )}
            </div>
            <div className="flex w-14 items-center justify-end bg-[#e6e6e6] pr-[7px]">
                <button type="button" aria-label="New sheet" className="text-[#888]">
                    <Icon w={17} h={17}>
                        <circle cx="8.500" cy="8.500" r="7.700" />
                        <path d="M4.500 8.500h8M8.500 4.500v8" strokeWidth="2" />
                    </Icon>
                </button>
            </div>
            <div className="ml-auto flex items-center">
                <div className="mr-3 flex flex-col gap-[3px]">
                    <span className="h-[2px] w-[2px] bg-[#444]" />
                    <span className="h-[2px] w-[2px] bg-[#444]" />
                    <span className="h-[2px] w-[2px] bg-[#444]" />
                </div>
                <div className="mb-[2px] mr-5 flex h-4 w-[312px] items-center rounded-full bg-[#f6f6f6] pl-[5px] pr-1 text-[#707070]">
                    <button type="button" aria-label="Scroll left"><Icon w={7} h={9}><path d="M7 0v9L0 4.500z" fill="currentColor" stroke="none" /></Icon></button>
                    <div className="ml-[5px] h-[9px] w-[187px] rounded-full bg-[#707070]" />
                    <button type="button" aria-label="Scroll right" className="ml-auto"><Icon w={7} h={9}><path d="M0 0v9l7-4.500z" fill="currentColor" stroke="none" /></Icon></button>
                </div>
            </div>
        </div>
    );
}

function StatusBar() {
    return (
        <footer className="flex h-[21px] shrink-0 items-center bg-[#f3f3f3] pl-[11px] pr-[19px]">
            <span>Ready</span>
            <button type="button" className="ml-[18px] flex items-center gap-[3px]">
                <Icon w={15} h={15}>
                    <circle cx="6.500" cy="2.500" r="1.700" />
                    <path d="M1 3.500l3.500 1.500v3.500L3 13.500M12 3.500L8.500 5v2M1 3.500C.5 2 1.500 2 2.500 2.300M12 3.500c.5-1.500-.5-1.500-1.500-1.200M6.500 9l-1.500 4.500M8 11l2.500 2.500L14.500 8.500" />
                </Icon>
                Accessibility: Good to go
            </button>
            <div className="ml-auto flex h-full items-center">
                <button type="button" className="mr-[18px] flex items-center gap-1">
                    <Icon w={14} h={14}>
                        <path d="M6 9.500H.5V1.500h13V5M2.500 11.500H6" />
                        <circle cx="10" cy="9.500" r="1.300" />
                        <path d="M10 5.500v2M10 11.500v2M6.500 7.500l2 1M11.500 10.500l2 1M6.500 11.500l2-1M11.500 8.500l2-1" strokeWidth="1.500" />
                    </Icon>
                    Display Settings
                </button>
                <Btn label="Normal view" className="h-full w-10 bg-[#e1e1e1]">
                    <Icon w={13} h={13}><path d="M.5 .5h12v12H.5zM4.500.5v12M8.500.5v12M.5 4.500h12M.5 8.500h12" /></Icon>
                </Btn>
                <Btn label="Page layout view" className="w-10">
                    <Icon w={14} h={13}><path d="M.5 .5h13v12H.5zM3.500 2.500h7v8h-7zM5 4.500h4M5 6.500h4M5 8.500h4" /></Icon>
                </Btn>
                <Btn label="Page break view" className="w-10">
                    <Icon w={14} h={13}><path d="M.5 .5h13v12H.5zM5.500.5v7M9.500.5v7h-9" /></Icon>
                </Btn>
                <Btn label="Zoom out" className="w-4"><Icon w={8} h={7}><path d="M0 3.500h8" /></Icon></Btn>
                <input
                    type="range"
                    aria-label="Zoom"
                    min={0}
                    max={100}
                    defaultValue={50}
                    className="mx-[2px] h-[11px] w-[100px] appearance-none bg-[linear-gradient(#777,#777)] bg-[length:100%_1px] bg-center bg-no-repeat [&::-webkit-slider-thumb]:h-[11px] [&::-webkit-slider-thumb]:w-[5px] [&::-webkit-slider-thumb]:appearance-none [&::-webkit-slider-thumb]:bg-[#666]"
                />
                <Btn label="Zoom in" className="w-4"><Icon w={7} h={7}><path d="M0 3.500h7M3.500 0v7" /></Icon></Btn>
                <span className="ml-2">100%</span>
            </div>
        </footer>
    );
}

export default function App() {
    return (
        <div className="flex h-screen flex-col overflow-hidden border border-t-0 border-[#107c41] bg-[#f0f0f0] font-['Noto_Sans','Noto_Sans_CJK_JP',sans-serif] text-[11px] text-[#262626]">
            <TitleBar />
            <MenuBar />
            <Ribbon />
            <FormulaBar />
            <Sheet />
            <SheetTabs />
            <StatusBar />
        </div>
    );
}
